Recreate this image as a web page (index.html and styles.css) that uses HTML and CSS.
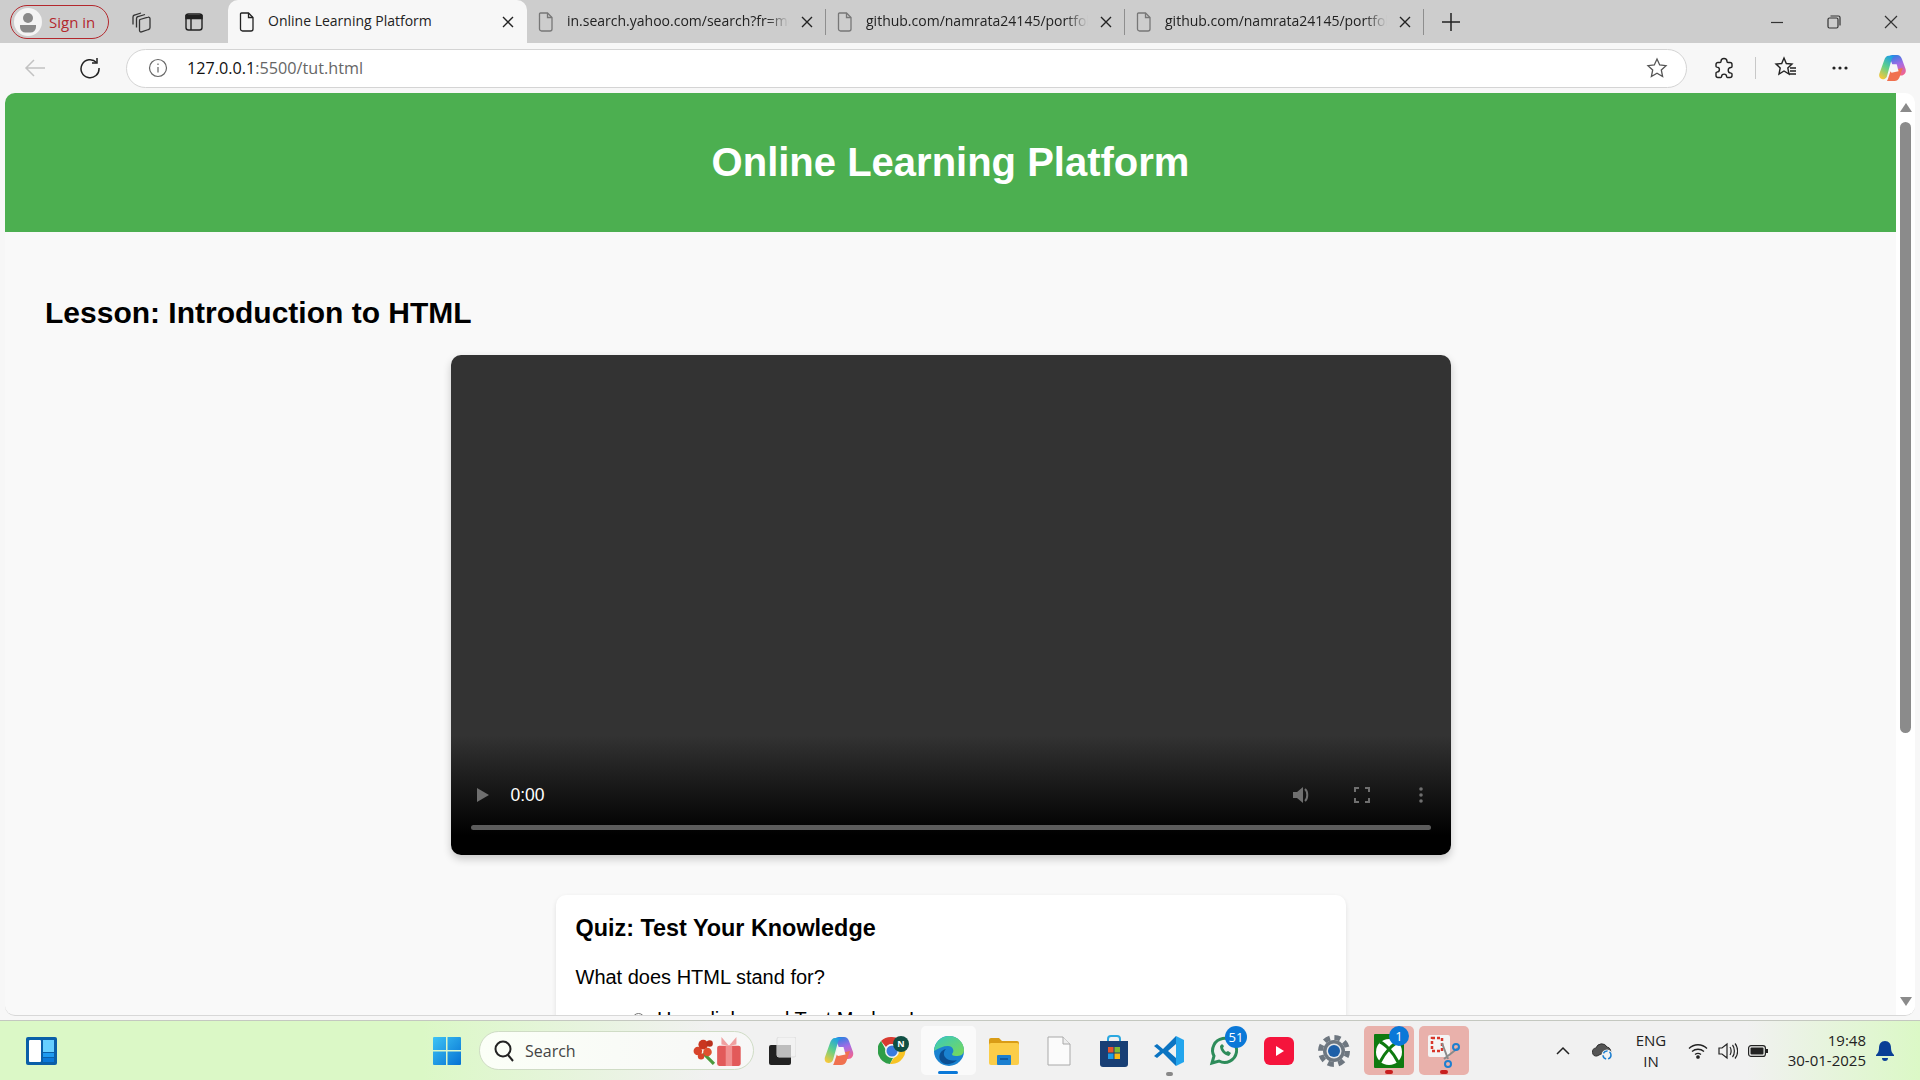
FILE: index.html
```html
<!DOCTYPE html>
<html>

<head>
    <meta name="viewport" content="width=device-width, initial-scale=1.0">
    <link rel="stylesheet" href="styles.css">
    <title>Online Learning Platform</title>
</head>

<body>
    <div class="tabstrip">
        <div class="signin">
            <span class="avatar">
                <svg width="26" height="26" viewBox="0 0 26 26"><circle cx="13" cy="9" r="5" fill="#8a8a8a"/><path d="M5 16h16v2a5.500 5.500 0 0 1-5.500 5.500h-5A5.500 5.500 0 0 1 5 18z" fill="#8a8a8a"/></svg>
            </span>
            <span>Sign in</span>
        </div>
        <div class="strip-btn strip-first">
            <svg width="22" height="22" viewBox="0 0 22 22" fill="none" stroke="#333" stroke-width="1.300"><path d="M10 8.500l8-2.300a1.500 1.500 0 0 1 2 1.500v8.800a2 2 0 0 1-1.500 2l-7 2.400a1.500 1.500 0 0 1-2-1.500V10a1.500 1.500 0 0 1 .500-1.500z"/><path d="M6.500 16.500V7.500a2 2 0 0 1 1.500-2l7-2"/><path d="M3 13.500V6a2 2 0 0 1 1.500-2l6.500-2"/></svg>
        </div>
        <div class="strip-btn">
            <svg width="20" height="20" viewBox="0 0 20 20" fill="none" stroke="#222" stroke-width="1.400"><rect x="2" y="2" width="16" height="16" rx="2.500"/><path d="M2 3.500h16v3H2z" fill="#222"/><path d="M7 6v12"/></svg>
        </div>

        <div class="tab tab-active">
            <svg class="fav" width="16" height="20" viewBox="0 0 16 20" fill="none" stroke="#222" stroke-width="1.300"><path d="M2.500 1h7l4.500 4.500V17a2 2 0 0 1-2 2H3.500a2 2 0 0 1-2-2V2a1 1 0 0 1 1-1z"/><path d="M9.500 1v4.500H14"/></svg>
            <span class="tab-title">Online Learning Platform</span>
            <svg class="tab-x" width="12" height="12" viewBox="0 0 12 12" stroke="#222" stroke-width="1.400"><path d="M1 1l10 10M11 1L1 11"/></svg>
        </div>
        <div class="tab">
            <svg class="fav" width="16" height="20" viewBox="0 0 16 20" fill="none" stroke="#777" stroke-width="1.300"><path d="M2.500 1h7l4.500 4.500V17a2 2 0 0 1-2 2H3.500a2 2 0 0 1-2-2V2a1 1 0 0 1 1-1z"/><path d="M9.500 1v4.500H14"/></svg>
            <span class="tab-title">in.search.yahoo.com/search?fr=mcafee</span>
            <svg class="tab-x" width="12" height="12" viewBox="0 0 12 12" stroke="#222" stroke-width="1.400"><path d="M1 1l10 10M11 1L1 11"/></svg>
        </div>
        <span class="tab-sep"></span>
        <div class="tab">
            <svg class="fav" width="16" height="20" viewBox="0 0 16 20" fill="none" stroke="#777" stroke-width="1.300"><path d="M2.500 1h7l4.500 4.500V17a2 2 0 0 1-2 2H3.500a2 2 0 0 1-2-2V2a1 1 0 0 1 1-1z"/><path d="M9.500 1v4.500H14"/></svg>
            <span class="tab-title">github.com/namrata24145/portfolio</span>
            <svg class="tab-x" width="12" height="12" viewBox="0 0 12 12" stroke="#222" stroke-width="1.400"><path d="M1 1l10 10M11 1L1 11"/></svg>
        </div>
        <span class="tab-sep"></span>
        <div class="tab">
            <svg class="fav" width="16" height="20" viewBox="0 0 16 20" fill="none" stroke="#777" stroke-width="1.300"><path d="M2.500 1h7l4.500 4.500V17a2 2 0 0 1-2 2H3.500a2 2 0 0 1-2-2V2a1 1 0 0 1 1-1z"/><path d="M9.500 1v4.500H14"/></svg>
            <span class="tab-title">github.com/namrata24145/portfolio</span>
            <svg class="tab-x" width="12" height="12" viewBox="0 0 12 12" stroke="#222" stroke-width="1.400"><path d="M1 1l10 10M11 1L1 11"/></svg>
        </div>
        <span class="tab-sep"></span>
        <svg class="newtab" width="20" height="20" viewBox="0 0 20 20" stroke="#222" stroke-width="1.500"><path d="M10 1v18M1 10h18"/></svg>

        <div class="window-btns">
            <svg width="14" height="14" viewBox="0 0 14 14" stroke="#333" stroke-width="1.200"><path d="M1 7.500h12"/></svg>
            <svg width="14" height="14" viewBox="0 0 14 14" fill="none" stroke="#333" stroke-width="1.200"><rect x="1" y="3" width="10" height="10" rx="1.500"/><path d="M3.500 1h8a1.500 1.500 0 0 1 1.500 1.500v8"/></svg>
            <svg width="14" height="14" viewBox="0 0 14 14" stroke="#333" stroke-width="1.200"><path d="M1 1l12 12M13 1L1 13"/></svg>
        </div>
    </div>

    <div class="toolbar">
        <svg class="back" width="22" height="20" viewBox="0 0 22 20" fill="none" stroke="#c2c2c2" stroke-width="1.500"><path d="M21 10H2M10 2l-8 8 8 8"/></svg>
        <svg class="reload" width="22" height="22" viewBox="0 0 22 22" fill="none" stroke="#222" stroke-width="1.500"><path d="M17.500 5.500A9 9 0 1 0 20 11"/><path d="M18 1v5h-5"/></svg>
        <div class="addressbar">
            <svg width="20" height="20" viewBox="0 0 20 20" fill="none" stroke="#666" stroke-width="1.200"><circle cx="10" cy="10" r="8.500"/><path d="M10 9v5.500M10 5.500v1.500"/></svg>
            <span class="url"><span class="url-host">127.0.0.1</span>:5500/tut.html</span>
            <svg class="star" width="22" height="22" viewBox="0 0 22 22" fill="none" stroke="#555" stroke-width="1.300"><path d="M11 2l2.700 6 6.300.7-4.700 4.300 1.300 6.500-5.600-3.300-5.600 3.300 1.300-6.500L2 8.700 8.300 8z"/></svg>
        </div>
        <svg class="tool-ext" width="24" height="24" viewBox="0 0 24 24" fill="none" stroke="#222" stroke-width="1.400"><path d="M9 5.500a3 3 0 0 1 6 0c0 .8.500 1 1 1h2a2 2 0 0 1 2 2v2c0 .6-.500 1-1 1a2.800 2.800 0 0 0 0 5.600c.500 0 1 .3 1 .9v1.500a2 2 0 0 1-2 2h-2.500c-.500 0-.8-.4-.9-.9a2.500 2.500 0 0 0-5 0c-.1.500-.4.900-.9.900H6a2 2 0 0 1-2-2v-2.500c0-.5.4-.8.900-.9a2.500 2.500 0 0 0 0-5C4.400 11 4 10.700 4 10.200V8.500a2 2 0 0 1 2-2h2c.5 0 1-.3 1-1z"/></svg>
        <span class="tool-sep"></span>
        <svg class="tool-fav" width="24" height="24" viewBox="0 0 24 24" fill="none" stroke="#222" stroke-width="1.400"><path d="M10 2l2.300 5.500 5.700.6-4.200 3.900 1.200 6-5-3-5 3 1.200-6L2 8.100l5.700-.6zM16 12h6M16 15h6M15 18h7"/></svg>
        <svg class="tool-dots" width="16" height="4" viewBox="0 0 16 4" fill="#222"><circle cx="2" cy="2" r="1.600"/><circle cx="8" cy="2" r="1.600"/><circle cx="14" cy="2" r="1.600"/></svg>
        <svg class="tool-copilot" width="29" height="28" viewBox="0 0 30 30">
            <defs>
                <linearGradient id="cpA" x1="0.7" y1="0" x2="0.2" y2="1"><stop offset="0" stop-color="#1b9de8"/><stop offset=".5" stop-color="#5fd08a"/><stop offset="1" stop-color="#f8c83a"/></linearGradient>
                <linearGradient id="cpB" x1="0.3" y1="0" x2="0.6" y2="1"><stop offset="0" stop-color="#2a7fe0"/><stop offset=".5" stop-color="#a56be6"/><stop offset="1" stop-color="#f0648f"/></linearGradient>
                <symbol id="copilotMark" viewBox="0 0 30 30">
                    <path d="M15 1h5c2.500 0 4 1.500 5 4l4 11c1 3.500-1 7-5 7h-5l-5-14c-.8-2-2-4-4-5 1-2 3-3 5-3z" fill="url(#cpB)"/>
                    <path d="M9 29h8c3 0 4.500-1.500 5.500-4L26 15l-13 3-3 9c-.4 1-.7 1.500-1 2z" fill="#f0714f"/>
                    <path d="M11 2h8c-2.500 0-4 1.500-5 4l-5 18c-.7 2-2.500 3-4.500 3C1.500 27 0 24 1 21L6 7c1-3 2.500-5 5-5z" fill="url(#cpA)"/>
                    <path d="M14.500 11h5l2 7.500-7.500 1.500-2-2z" fill="#f7f7f7"/>
                </symbol>
            </defs>
            <use href="#copilotMark" width="30" height="30"/>
        </svg>
    </div>

    <div class="viewport">
        <div class="page">
            <header class="site-header">
                <h1>Online Learning Platform</h1>
            </header>
            <main class="lesson">
                <h2>Lesson: Introduction to HTML</h2>
                <div class="video">
                    <div class="video-row">
                        <svg width="14" height="16" viewBox="0 0 14 16" fill="#6f6f6f"><path d="M1 1l12 7-12 7z"/></svg>
                        <span class="video-time">0:00</span>
                        <svg class="video-vol" width="22" height="22" viewBox="0 0 22 22" fill="#6f6f6f"><path d="M2 8h4l6-5v16l-6-5H2z"/><path d="M14 5c3 2.500 3 9.500 0 12" fill="none" stroke="#6f6f6f" stroke-width="2"/></svg>
                        <svg class="video-full" width="16" height="16" viewBox="0 0 16 16" fill="none" stroke="#6f6f6f" stroke-width="2"><path d="M1 5V1h4M11 1h4v4M15 11v4h-4M5 15H1v-4"/></svg>
                        <svg class="video-more" width="4" height="16" viewBox="0 0 4 16" fill="#6f6f6f"><circle cx="2" cy="2" r="1.800"/><circle cx="2" cy="8" r="1.800"/><circle cx="2" cy="14" r="1.800"/></svg>
                    </div>
                    <div class="video-track"></div>
                </div>
                <section class="quiz">
                    <h3>Quiz: Test Your Knowledge</h3>
                    <p>What does HTML stand for?</p>
                    <label class="answer"><input type="radio" name="q1"> Hyperlinks and Text Markup Language</label>
                </section>
            </main>
        </div>
        <div class="scrollbar">
            <span class="arrow-up"></span>
            <span class="thumb"></span>
            <span class="arrow-down"></span>
        </div>
    </div>

    <div class="taskbar">
        <svg class="widgets" width="32" height="28" viewBox="0 0 32 28">
            <rect width="31" height="28" rx="2" fill="#0a5fa8"/>
            <rect x="3" y="3" width="12" height="22" rx="1" fill="#fff"/>
            <rect x="17" y="3" width="11" height="12" fill="#66cfff"/>
            <rect x="17" y="16" width="11" height="4" fill="#1e9af0"/>
            <rect x="17" y="21" width="11" height="4" fill="#0a78d8"/>
        </svg>
        <svg class="start" width="30" height="30" viewBox="0 0 30 30">
            <defs><linearGradient id="winG" x1="0" y1="0" x2="1" y2="1"><stop offset="0" stop-color="#3ec4f5"/><stop offset="1" stop-color="#0571d3"/></linearGradient></defs>
            <path d="M1 2a1 1 0 0 1 1-1h12v13H1zM15.500 1H28a1 1 0 0 1 1 1v12H15.500zM1 15.500h13V29H2a1 1 0 0 1-1-1zM15.500 15.500H29V28a1 1 0 0 1-1 1H15.500z" fill="url(#winG)"/>
        </svg>
        <div class="searchbox">
            <svg width="22" height="24" viewBox="0 0 22 24" fill="none" stroke="#222" stroke-width="2"><circle cx="10" cy="10" r="7.500"/><path d="M15 16l5 6"/></svg>
            <span class="search-text">Search</span>
            <svg class="search-art" width="54" height="30" viewBox="0 0 50 28">
                <path d="M14 16l10 10" stroke="#4c9a3d" stroke-width="3"/>
                <circle cx="9" cy="14" r="4" fill="#d8442a"/><circle cx="14" cy="8" r="4.500" fill="#c9361f"/><circle cx="18" cy="15" r="4" fill="#e0512e"/><circle cx="12" cy="19" r="3" fill="#d8442a"/><circle cx="20" cy="7" r="3" fill="#b9301c"/>
                <rect x="27" y="9" width="22" height="19" rx="2" fill="#e25a5a"/><rect x="35" y="9" width="6" height="19" fill="#f08f8f"/>
                <path d="M38 9l-7-8v7zM38 9l7-8v7z" fill="#f0a0a0"/>
            </svg>
        </div>
        <div class="task-icons">
            <span class="task-slot">
                <svg width="28" height="28" viewBox="0 0 28 28"><rect x="1" y="8" width="22" height="20" rx="2" fill="#222"/><rect x="9" y="0" width="19" height="20" rx="2" fill="#f2f2f2" stroke="#ddd"/><rect x="9" y="8" width="14" height="12" fill="#bdbdbd"/></svg>
            </span>
            <span class="task-slot slot-shift">
                <svg width="30" height="30" viewBox="0 0 30 30"><use href="#copilotMark" width="30" height="30"/></svg>
            </span>
            <span class="task-slot">
                <svg width="32" height="32" viewBox="0 0 32 32">
                    <path d="M14 2a14 14 0 0 1 12 7H14a7 7 0 0 0-6 3L3 6a14 14 0 0 1 11-4z" fill="#d93a30"/>
                    <path d="M3 6l6 11a7 7 0 0 0 7 4l-4 8A14 14 0 0 1 3 6z" fill="#2f9e48"/>
                    <path d="M26 9a14 14 0 0 1-14 20l6-10a7 7 0 0 0 0-10z" fill="#f7c324"/>
                    <circle cx="14" cy="16" r="7" fill="#f4f4f4"/>
                    <circle cx="14" cy="16" r="5.500" fill="#3a7be0"/>
                    <circle cx="23" cy="9" r="8" fill="#0f4f43"/>
                    <text x="23" y="12" class="chrome-n" text-anchor="middle">N</text>
                </svg>
            </span>
            <span class="task-slot slot-edge">
                <svg width="32" height="32" viewBox="0 0 32 32">
                    <defs><linearGradient id="edgeG" x1="0" y1="0" x2="1" y2="1"><stop offset="0" stop-color="#36c9c0"/><stop offset="1" stop-color="#7ad957"/></linearGradient></defs>
                    <circle cx="16" cy="16" r="15" fill="#1a82d0"/>
                    <path d="M1 16C2 6 9 1 16 1c9 0 15 7 15 14 0 5-4 6-8 6-3 0-4-1-4-2 3-3 1-8-4-8-5 0-9 2-14 5z" fill="url(#edgeG)"/>
                    <path d="M24 25c-4 5-14 6-17 0-2-5 1-10 6-11-2 2-3 5-1 8 3 4 8 4 12 3z" fill="#0b4f93"/>
                </svg>
            </span>
            <span class="task-slot">
                <svg width="30" height="28" viewBox="0 0 30 28"><path d="M0 3a2 2 0 0 1 2-2h8l3 3h15a2 2 0 0 1 2 2v2H0z" fill="#d99c16"/><rect y="6" width="30" height="22" rx="2" fill="#fbcd48"/><rect x="8" y="18" width="14" height="10" rx="1" fill="#1b7fd0"/><path d="M11 22h8" stroke="#0b4f93" stroke-width="1.500"/></svg>
            </span>
            <span class="task-slot">
                <svg width="24" height="30" viewBox="0 0 24 30"><path d="M1 1h15l7 7v21H1z" fill="#fbfbfb" stroke="#a9a9a9"/><path d="M16 1v7h7" fill="#eee" stroke="#a9a9a9"/></svg>
            </span>
            <span class="task-slot">
                <svg width="30" height="32" viewBox="0 0 30 32"><path d="M9 7V4a3 3 0 0 1 3-3h6a3 3 0 0 1 3 3v3" fill="none" stroke="#2ba8e0" stroke-width="2"/><path d="M1 6h28v23a3 3 0 0 1-3 3H4a3 3 0 0 1-3-3z" fill="#183f75"/><rect x="9" y="12" width="5.500" height="5.500" fill="#e8552c"/><rect x="15.500" y="12" width="5.500" height="5.500" fill="#7ebb32"/><rect x="9" y="18.500" width="5.500" height="5.500" fill="#1d9ce6"/><rect x="15.500" y="18.500" width="5.500" height="5.500" fill="#f9b915"/></svg>
            </span>
            <span class="task-slot">
                <svg width="32" height="32" viewBox="0 0 32 32"><path d="M23 1l8 4v22l-8 4z" fill="#23a5ed"/><path d="M23 1L10 14 4 9l-3 2 6 5-6 5 3 2 6-5 13 13v-8l-8-7 8-7z" fill="#0b74c2"/></svg>
                <i class="dot-gray"></i>
            </span>
            <span class="task-slot">
                <svg width="32" height="32" viewBox="0 0 32 32" fill="none"><path d="M4 28l2-7a12 12 0 1 1 5 5z" stroke="#2d8c5a" stroke-width="3"/><path d="M12 11c0 5 4 9 9 10l2-3-3-2-2 1c-1-1-2-2-3-4l1-2-2-2z" fill="#2d8c5a"/></svg>
                <b class="badge badge-wa">51</b>
            </span>
            <span class="task-slot">
                <svg width="30" height="28" viewBox="0 0 30 28"><rect width="30" height="28" rx="6" fill="#f5143c"/><path d="M12 9l8 5-8 5z" fill="#fff"/></svg>
            </span>
            <span class="task-slot">
                <svg width="32" height="32" viewBox="0 0 32 32" fill="none"><circle cx="16" cy="16" r="13.500" stroke="#6e7780" stroke-width="5" stroke-dasharray="6.100 4.500"/><circle cx="16" cy="16" r="11" fill="#6e7780"/><circle cx="16" cy="16" r="7.500" fill="#e3e6e9"/><circle cx="16" cy="16" r="6" fill="#1d5fa8"/></svg>
            </span>
            <span class="task-slot slot-open slot-first">
                <svg width="30" height="34" viewBox="0 0 30 34"><rect width="30" height="34" rx="1" fill="#0f7a10"/><circle cx="15" cy="18" r="13" fill="#fff"/><path d="M6 8c5 2 13 10 18 20M24 8C19 10 11 18 6 28" fill="none" stroke="#0f7a10" stroke-width="3"/></svg>
                <b class="badge badge-xbox">1</b>
                <i class="dot-red"></i>
            </span>
            <span class="task-slot slot-open">
                <svg width="32" height="36" viewBox="0 0 32 36"><rect x="0" y="2" width="22" height="22" rx="2" fill="#f4f4f4"/><rect x="4" y="5" width="10" height="13" fill="none" stroke="#d8362a" stroke-width="2.500" stroke-dasharray="3 2"/><path d="M14 10l6 16M30 15l-14 11" stroke="#8a8a8a" stroke-width="2"/><circle cx="28" cy="14" r="3" fill="none" stroke="#1d7fd0" stroke-width="2"/><circle cx="20" cy="31" r="3" fill="none" stroke="#1d7fd0" stroke-width="2"/></svg>
                <i class="dot-red"></i>
            </span>
        </div>
        <div class="tray">
            <svg class="tray-caret" width="14" height="10" viewBox="0 0 14 10" fill="none" stroke="#222" stroke-width="1.500"><path d="M1 8l6-6 6 6"/></svg>
            <svg class="tray-cloud" width="22" height="20" viewBox="0 0 22 20"><path d="M5 15a4 4 0 0 1-1-8 6 6 0 0 1 11-1 4.500 4.500 0 0 1 3 7H9z" fill="#555" stroke="#333"/><circle cx="15" cy="14" r="5.500" fill="#f2f2f2"/><circle cx="15" cy="14" r="4" fill="none" stroke="#1d7fd0" stroke-width="1.500" stroke-dasharray="5 2"/></svg>
            <div class="tray-lang">ENG<br>IN</div>
            <svg class="tray-wifi" width="20" height="16" viewBox="0 0 20 16" fill="none" stroke="#222" stroke-width="1.300"><path d="M1 5.500c5-5 13-5 18 0M4 8.500c3.500-3 8.500-3 12 0M7 11.500c2-1.500 4-1.500 6 0"/><circle cx="10" cy="14" r="1.200" fill="#222"/></svg>
            <svg class="tray-vol" width="20" height="18" viewBox="0 0 20 18" fill="none" stroke="#222" stroke-width="1.200"><path d="M1 6h3l5-4v14l-5-4H1zM12 5c1.500 2 1.500 6 0 8M14.500 3c2.500 3 2.500 9 0 12M17 1.500c3.500 4 3.500 11 0 15"/></svg>
            <svg class="tray-batt" width="20" height="12" viewBox="0 0 20 12"><rect x=".6" y=".6" width="16.800" height="10.800" rx="2.500" fill="none" stroke="#222" stroke-width="1.200"/><rect x="2.500" y="2.500" width="13" height="7" rx="1" fill="#222"/><rect x="18" y="4" width="2" height="4" fill="#222"/></svg>
            <div class="tray-clock">19:48<br>30-01-2025</div>
            <svg class="tray-bell" width="18" height="20" viewBox="0 0 18 20" fill="#0a3f96"><path d="M9 0c4 0 6 3 6 7 0 3 1 5 3 7v1H0v-1c2-2 3-4 3-7 0-4 2-7 6-7zM6 17h6a3 3 0 0 1-6 0z"/></svg>
        </div>
    </div>
</body>

</html>
```

FILE: styles.css
```css
html,
body {
    margin: 0;
    height: 100%;
    overflow: hidden;
}

body {
    display: flex;
    flex-direction: column;
    height: 1080px;
    background-color: #f7f7f7;
    font-family: "Liberation Sans", Arial, sans-serif;
}

/* browser tabs */
.tabstrip {
    display: flex;
    align-items: center;
    height: 43px;
    flex: none;
    background-color: #cdcdcd;
    font-family: "Open Sans", sans-serif;
    font-size: 14px;
    color: #222;
}

.signin {
    display: flex;
    align-items: center;
    gap: 7px;
    width: 99px;
    height: 34px;
    box-sizing: border-box;
    margin-left: 10px;
    padding-left: 3px;
    border: 1.5px solid #b3282d;
    border-radius: 17px;
    color: #b3282d;
    font-size: 15px;
}

.avatar {
    display: flex;
    align-items: center;
    justify-content: center;
    width: 28px;
    height: 28px;
    border-radius: 50%;
    background-color: #f4f4f4;
}

.strip-btn {
    display: flex;
    justify-content: center;
    width: 53px;
}

.strip-first {
    margin-left: 5px;
}

.tab {
    display: flex;
    align-items: center;
    width: 298px;
    height: 43px;
    box-sizing: border-box;
    padding-left: 11px;
}

.tab-active {
    width: 299px;
    margin-left: 8px;
    border-radius: 10px 10px 0 0;
    background-color: #f7f7f7;
}

.fav {
    flex: none;
}

.tab-title {
    flex: none;
    width: 222px;
    margin: -2px 0 0 13px;
    overflow: hidden;
    white-space: nowrap;
    -webkit-mask-image: linear-gradient(to right, #000 90%, transparent);
    mask-image: linear-gradient(to right, #000 90%, transparent);
}

.tab-active .tab-title {
    -webkit-mask-image: none;
    mask-image: none;
}

.tab-x {
    flex: none;
    margin-left: 12px;
}

.tab-sep {
    flex: none;
    width: 1px;
    height: 26px;
    background-color: #8e8e8e;
}

.newtab {
    margin-left: 17px;
}

.window-btns {
    display: flex;
    gap: 43px;
    margin-left: auto;
    margin-right: 22px;
}

/* address row */
.toolbar {
    display: flex;
    align-items: center;
    height: 50px;
    flex: none;
    background-color: #f7f7f7;
}

.back {
    margin-left: 24px;
}

.reload {
    margin-left: 33px;
}

.addressbar {
    display: flex;
    align-items: center;
    width: 1561px;
    height: 39px;
    box-sizing: border-box;
    margin-left: 25px;
    padding: 0 18px 0 21px;
    border: 1.5px solid #d4d4d4;
    border-radius: 20px;
    background-color: #fff;
}

.url {
    margin: -1px 0 0 19px;
    font-family: "Open Sans", sans-serif;
    font-size: 16.2px;
    color: #666;
}

.url-host {
    color: #111;
}

.star {
    margin-left: auto;
}

.tool-ext {
    margin-left: 25px;
}

.tool-sep {
    width: 1px;
    height: 22px;
    margin-left: 19px;
    background-color: #c8c8c8;
}

.tool-fav {
    margin-left: 18px;
}

.tool-dots {
    margin-left: 34px;
}

.tool-copilot {
    margin-left: 30px;
}

/* page in the browser */
.viewport {
    display: flex;
    height: 923px;
    flex: none;
    margin: 0 5px;
    overflow: hidden;
    border-radius: 10px;
    border-bottom: 1px solid #d8d8d8;
    box-sizing: border-box;
    background-color: #f9f9f9;
}

.page {
    flex: 1;
    min-width: 0;
    overflow: hidden;
}

.site-header {
    height: 139px;
    box-sizing: border-box;
    padding-top: 45px;
    background-color: #4caf50;
    text-align: center;
}

.site-header h1 {
    margin: 0;
    font-size: 40px;
    line-height: 48px;
    color: #fff;
}

.lesson {
    padding: 63px 40px 0;
}

.lesson h2 {
    margin: 0;
    font-size: 30px;
    line-height: 35px;
    color: #000;
}

.video {
    display: flex;
    flex-direction: column;
    justify-content: flex-end;
    width: 1000px;
    height: 500px;
    box-sizing: border-box;
    margin: 25px auto 0;
    padding: 0 20px 25px;
    border-radius: 10px;
    background: linear-gradient(to bottom, #333 0, #333 76%, #000 96%);
    box-shadow: 0 4px 8px rgba(0, 0, 0, 0.2);
}

.video-row {
    display: flex;
    align-items: center;
    height: 24px;
    padding: 0 0 0 5px;
}

.video-time {
    margin-left: 21px;
    font-size: 17.5px;
    color: #fff;
}

.video-vol {
    margin-left: auto;
}

.video-full {
    margin-left: 41px;
}

.video-more {
    margin-left: 49px;
    margin-right: 8px;
}

.video-track {
    height: 5px;
    margin-top: 18px;
    border-radius: 3px;
    background-color: #5c5c5c;
}

.quiz {
    width: 790px;
    box-sizing: border-box;
    margin: 40px auto 0;
    padding: 19px 20px 20px;
    border-radius: 10px;
    background-color: #fff;
    box-shadow: 0 2px 5px rgba(0, 0, 0, 0.1);
}

.quiz h3 {
    margin: 0;
    font-size: 23.4px;
    line-height: 28px;
    color: #000;
}

.quiz p {
    margin: 24px 0 0;
    font-size: 20px;
    line-height: 23px;
}

.answer {
    display: block;
    margin-top: 19px;
    padding-left: 53px;
    font-size: 20px;
}

.answer input {
    margin: 3px 7px 0 3px;
}

.scrollbar {
    display: flex;
    flex: none;
    flex-direction: column;
    align-items: center;
    width: 19px;
    background-color: #fff;
}

.arrow-up,
.arrow-down {
    width: 0;
    height: 0;
    border-left: 6px solid transparent;
    border-right: 6px solid transparent;
}

.arrow-up {
    margin-top: 10px;
    border-bottom: 9px solid #8b8b8b;
}

.arrow-down {
    margin-top: 264px;
    border-top: 9px solid #8b8b8b;
}

.thumb {
    width: 11px;
    height: 611px;
    margin-top: 10px;
    border-radius: 6px;
    background-color: #8b8b8b;
}

/* windows taskbar */
.taskbar {
    display: flex;
    align-items: center;
    height: 60px;
    flex: none;
    margin-top: 4px;
    border-top: 1px solid #c4c8c0;
    box-sizing: border-box;
    background: linear-gradient(to right, #dbf8c6 0, #dbf8c6 22%, #f1f1f1 37%, #f1f1f1 91%, #dbf8c6 100%);
}

.widgets {
    flex: none;
    margin-left: 26px;
}

.start {
    flex: none;
    margin-left: 374px;
}

.searchbox {
    display: flex;
    align-items: center;
    width: 275px;
    height: 39px;
    box-sizing: border-box;
    margin-left: 17px;
    padding: 0 11px 0 13px;
    border: 1px solid #cfdcc5;
    border-radius: 20px;
    background: linear-gradient(to right, #fbfff7, #f7f7f7);
}

.search-text {
    margin-left: 10px;
    font-family: "Open Sans", sans-serif;
    font-size: 16px;
    color: #444;
}

.search-art {
    margin-left: auto;
}

.task-icons {
    display: flex;
    align-items: center;
}

.task-slot {
    position: relative;
    display: flex;
    flex: none;
    align-items: center;
    justify-content: center;
    width: 55px;
    height: 49px;
    border-radius: 5px;
}

.slot-shift {
    margin-left: 2px;
}

.slot-edge {
    background-color: #fafafa;
}

.slot-edge::after {
    content: "";
    position: absolute;
    left: 17px;
    bottom: 1px;
    width: 20px;
    height: 3px;
    border-radius: 2px;
    background-color: #0a78d8;
}

.slot-open {
    width: 50px;
    margin-left: 5px;
    background-color: #e9b1ab;
}

.slot-first {
    margin-left: 3px;
}

.dot-gray,
.dot-red {
    position: absolute;
    bottom: 1px;
    left: 50%;
    height: 4px;
    border-radius: 2px;
}

.dot-gray {
    bottom: -1px;
    width: 7px;
    margin-left: -3px;
    background-color: #888;
}

.dot-red {
    width: 8px;
    margin-left: -4px;
    background-color: #c81e1e;
}

.badge {
    position: absolute;
    display: flex;
    align-items: center;
    justify-content: center;
    top: 0;
    border-radius: 50%;
    background-color: #0a78d8;
    color: #fff;
    font-family: "Open Sans", sans-serif;
    font-size: 13px;
    font-weight: 400;
}

.badge-wa {
    right: 4px;
    width: 22px;
    height: 22px;
}

.badge-xbox {
    right: 5px;
    width: 20px;
    height: 20px;
}

.chrome-n {
    font-family: "Open Sans", sans-serif;
    font-size: 9px;
    font-weight: 700;
    fill: #fff;
}

.tray {
    display: flex;
    flex: 1;
    align-items: center;
    color: #222;
    font-family: "Open Sans", sans-serif;
    font-size: 15px;
}

.tray-caret {
    margin-left: 87px;
}

.tray-cloud {
    margin-left: 22px;
}

.tray-lang {
    width: 40px;
    margin-left: 17px;
    line-height: 21px;
    text-align: center;
}

.tray-wifi {
    margin-left: 17px;
}

.tray-vol {
    margin-left: 10px;
}

.tray-batt {
    margin-left: 10px;
}

.tray-clock {
    margin: -2px 0 0 auto;
    line-height: 20px;
    text-align: right;
}

.tray-bell {
    margin: 0 26px 0 10px;
}
```
